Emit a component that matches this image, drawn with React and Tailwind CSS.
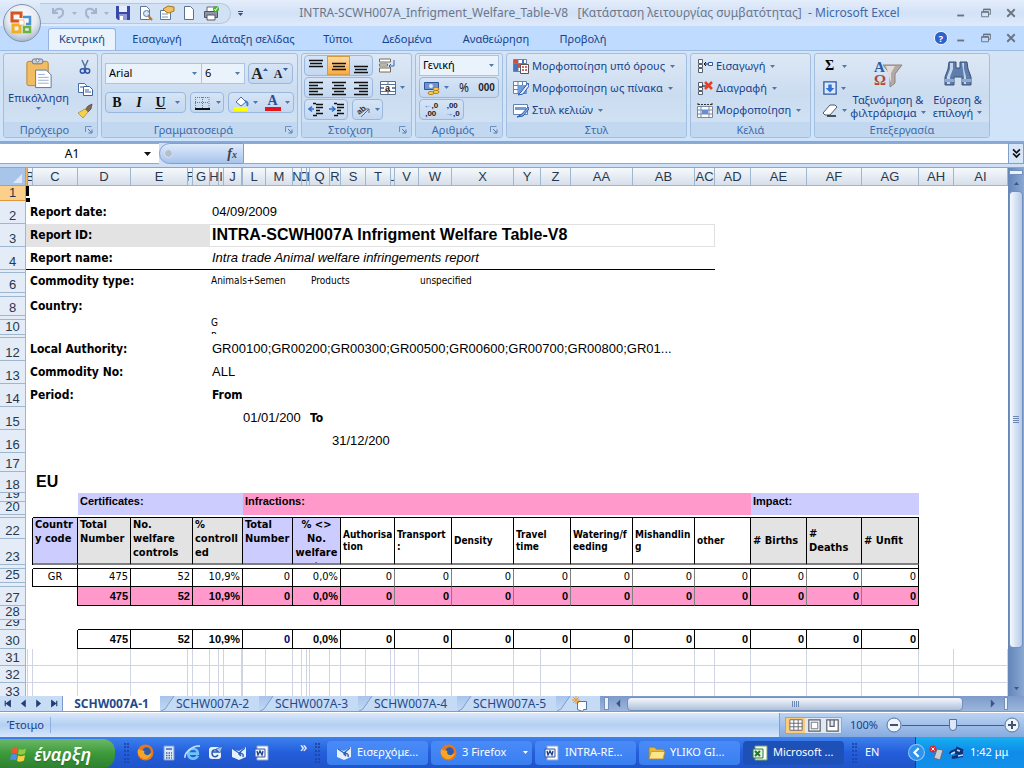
import React from 'react';

const COLUMNS = [
  ['A', 2], ['B', 5], ['C', 45], ['D', 53], ['E', 57], ['F', 5], ['G', 17], ['H', 9], ['I', 5],
  ['J', 18], ['', 1], ['L', 23], ['M', 27], ['N', 9], ['O', 5], ['I', 3], ['Q', 20], ['R', 11],
  ['S', 25], ['T', 25], ['U', 4], ['V', 24], ['W', 33], ['X', 62], ['Y', 27], ['Z', 30],
  ['AA', 62], ['AB', 62], ['AC', 20], ['AD', 36], ['AE', 56], ['AF', 55], ['AG', 57], ['AH', 35], ['AI', null],
];

const HEADERS = [
  { text: 'Countr y code', span: 1, look: 'bg-[#ccccff] items-start text-[11px] leading-[14px]' },
  { text: 'Total Number', span: 1, look: 'bg-[#e3e3e3] items-start text-[11px] leading-[14px]' },
  { text: 'No. welfare controls', span: 2, look: 'bg-[#e3e3e3] items-start text-[11px] leading-[14px]' },
  { text: '% controll ed', span: 5, look: 'bg-[#e3e3e3] items-start text-[11px] leading-[14px]' },
  { text: 'Total Number', span: 2, look: 'bg-[#ccccff] items-start text-[11px] leading-[14px]' },
  { text: '% <> No. welfare t', span: 5, look: 'bg-[#ccccff] items-start text-center text-[11px] leading-[14px]' },
  { text: 'Authorisa tion', span: 3, look: 'bg-white items-center text-[10px] leading-3' },
  { text: 'Transport :', span: 2, look: 'bg-white items-center text-[10px] leading-3' },
  { text: 'Density', span: 1, look: 'bg-white items-center text-[10px] leading-3' },
  { text: 'Travel time', span: 2, look: 'bg-white items-center text-[10px] leading-3' },
  { text: 'Watering/f eeding', span: 1, look: 'bg-white items-center text-[10px] leading-3' },
  { text: 'Mishandlin g', span: 1, look: 'bg-white items-center text-[10px] leading-3' },
  { text: 'other', span: 2, look: 'bg-white items-center text-[10px] leading-3' },
  { text: '# Births', span: 1, look: 'bg-[#e3e3e3] items-center text-[11px] leading-[14px]' },
  { text: '#\nDeaths', span: 1, look: 'bg-[#e3e3e3] items-center text-[11px] leading-[14px]' },
  { text: '# Unfit', span: 1, look: 'bg-[#e3e3e3] items-center text-[11px] leading-[14px]' },
];

const VALUES = ['475', '52', '10,9%', '0', '0,0%', '0', '0', '0', '0', '0', '0', '0', '0', '0', '0'];

/* ---------- small shared pieces ---------- */

const Caret = ({ className = 'text-[#5078b0]' }) => (
  <svg viewBox="0 0 5 3" className={`w-[5px] h-[3px] shrink-0 ${className}`}><path d="M0 0h5L2.5 3z" fill="currentColor" /></svg>
);

const Svg = ({ s = 16, children, className = '' }) => (
  <svg width={s} height={s} viewBox="0 0 16 16" fill="none" className={`shrink-0 ${className}`}>{children}</svg>
);

const Lines = ({ rows }) => (
  <Svg>
    {rows.map(([y, x, w]) => <path key={y} d={`M${x} ${y + 0.5}h${w}`} stroke="#111" strokeWidth="1.500" />)}
  </Svg>
);

const Box = ({ children, className = '' }) => (
  <div className={`flex items-stretch h-[21px] border border-[#9ab8de] rounded-sm bg-linear-to-b from-[#d6e4f5] to-[#c3d8f0] ${className}`}>{children}</div>
);

const IconButton = ({ label, children, className = 'w-[22px]' }) => (
  <button type="button" aria-label={label} className={`flex items-center justify-center gap-1 ${className}`}>{children}</button>
);

const Combo = ({ label, value, className }) => (
  <div className={`flex items-center h-[21px] pl-[3px] pr-1 border border-[#abc4e4] bg-[#eaf2fb] ${className}`}>
    <select aria-label={label} className="appearance-none flex-1 min-w-0 bg-transparent text-[11px] text-black outline-none">
      <option>{value}</option>
    </select>
    <Caret />
  </div>
);

const Group = ({ title, launcher, className, children }) => (
  <section className={`flex flex-col h-[85px] border border-[#a3bfdf] rounded-[3px] overflow-hidden bg-linear-to-b from-[#dde8f5] via-[#cbdcf0] to-[#d3e4f6] shrink-0 ${className}`}>
    <div className="flex-1 min-h-0">{children}</div>
    <div className="flex items-center h-[15px] bg-[#c1d8f0] text-[11px] text-[#3e6aaa]">
      <span className="flex-1 text-center leading-[14px]">{title}</span>
      {launcher && (
        <button type="button" aria-label={`${title}: επιλογές`} className="mr-1">
          <Svg s={8}><path d="M1 12V1h12" stroke="#6c8fc0" strokeWidth="2" /><path d="M6 6l7 7M14 7v7H7" stroke="#5078b0" strokeWidth="2" /></Svg>
        </button>
      )}
    </div>
  </section>
);

const RibbonItem = ({ icon, text }) => (
  <button type="button" className="flex items-center gap-[3px] h-[22px] text-[11px] text-[#15428b] whitespace-nowrap">
    {icon}<span className="pr-[2px]">{text}</span><Caret />
  </button>
);

const WindowButtons = ({ className = '' }) => (
  <div className={`flex items-center text-[#6b7482] ${className}`}>
    <button type="button" aria-label="Ελαχιστοποίηση" className="w-[25px]"><Svg s={10}><path d="M2 12h11" stroke="currentColor" strokeWidth="3" /></Svg></button>
    <button type="button" aria-label="Επαναφορά" className="w-[25px]"><Svg s={10}><path d="M4 5V2h11v8h-3M1 6h11v8H1z" stroke="currentColor" strokeWidth="1.5" /><path d="M1 6.500h11M4 2.500h11" stroke="currentColor" strokeWidth="2.500" /></Svg></button>
    <button type="button" aria-label="Κλείσιμο" className="w-[18px]"><Svg s={10}><path d="M2 2l12 12M14 2L2 14" stroke="currentColor" strokeWidth="3" /></Svg></button>
  </div>
);

/* ---------- icons ---------- */

const OfficeLogo = () => (
  <svg viewBox="0 0 40 40" className="w-10 h-10">
    <defs>
      <radialGradient id="orb" cx="50%" cy="35%" r="65%">
        <stop offset="0" stopColor="#ffffff" /><stop offset=".6" stopColor="#e6ebf2" /><stop offset="1" stopColor="#a9b8cc" />
      </radialGradient>
    </defs>
    <circle cx="20" cy="20" r="18.500" fill="url(#orb)" stroke="#7f93b0" />
    <g fill="none" strokeWidth="3">
      <path d="M17 18h-7v-8h9v5" stroke="#d9531e" />
      <path d="M21 14h7v7h-4" stroke="#4a90d9" strokeWidth="2.500" />
      <path d="M18 22v7h-7v-7z" stroke="#f0b020" />
      <path d="M22 24h6v5h-6z" stroke="#6cb33f" strokeWidth="2.500" />
    </g>
    <path d="M17 17h5v5h-5z" fill="#fff" stroke="#e8a070" strokeWidth=".7" />
  </svg>
);

const Undo = () => <Svg className="text-[#a3b4cc]"><path d="M3 3v5h5M4 7c3-5 10-4 9 1 0 2-2 4-5 5" stroke="currentColor" strokeWidth="2" /></Svg>;
const Redo = () => <Svg className="text-[#a3b4cc]"><path d="M13 3v5H8M12 7C9 2 2 3 3 8c0 2 1 4 3 5" stroke="currentColor" strokeWidth="2" /></Svg>;
const Save = () => <Svg><path d="M1 1h14v14H3l-2-2z" fill="#3a49a8" /><path d="M4 1h8v6H4z" fill="#e8ecff" /><path d="M4 9h8v6H4z" fill="#8f9bd8" /><path d="M5 11h3v4H5z" fill="#fff" /></Svg>;
const Page = () => <path d="M3.500 1.500h6l3 3v10h-9z" fill="#fff" stroke="#5b7196" />;
const Preview = () => <Svg><Page /><circle cx="9.500" cy="8.500" r="3" fill="#d5e8fb" stroke="#56789f" /><path d="M11.500 11l3.500 4" stroke="#b4762c" strokeWidth="2" /></Svg>;
const Props = () => <Svg><path d="M1.500 5.500h10v9h-10z" fill="#fff" stroke="#56789f" /><path d="M3 9h6M3 12h6" stroke="#7c94b8" /><path d="M4 4l5-3 6 1v4l-5 2-3-1z" fill="#f2c160" stroke="#a87420" /></Svg>;
const Print = () => <Svg><path d="M4 2h8v5H4z" fill="#fff" stroke="#667" /><path d="M1.500 6.500h13v6h-13z" fill="#8c95a3" stroke="#4c5563" /><path d="M4 10h8v5H4z" fill="#fff" stroke="#556" /><circle cx="13" cy="4" r="3" fill="#4fae3a" /><path d="M11.500 4l1 1.500 2-3" stroke="#fff" /></Svg>;

const Clipboard = () => (
  <svg viewBox="0 0 28 32" className="w-7 h-[31px]">
    <rect x="1.500" y="3.500" width="22" height="25" rx="2" fill="#f2bd62" stroke="#b98431" />
    <rect x="7" y="1" width="11" height="5" rx="2" fill="#c9d0da" stroke="#6d7888" /><circle cx="12.500" cy="2.500" r="1.500" fill="#fff" stroke="#6d7888" />
    <path d="M10.500 12.500h11l5 5v13h-16z" fill="#fff" stroke="#60789c" />
    <path d="M13 17h7M13 20h11M13 23h11M13 26h11" stroke="#9ab0cf" />
  </svg>
);
const Scissors = () => <Svg><path d="M5 1l4 9M11 1L7 10" stroke="#54749f" strokeWidth="1.500" /><circle cx="5.500" cy="12" r="2.200" stroke="#2f55a4" strokeWidth="1.500" /><circle cx="10.500" cy="12" r="2.200" stroke="#2f55a4" strokeWidth="1.500" /></Svg>;
const Copy = () => <Svg><path d="M1.500 2.500h6l2 2v7h-8z" fill="#fff" stroke="#4b6ea8" /><path d="M6.500 5.500h6l3 3v6h-9z" fill="#fff" stroke="#3d62a4" /><path d="M3 6h3M8 9h4M8 11h6" stroke="#3d62a4" /></Svg>;
const Brush = () => <Svg><path d="M15 1l-4 2-3 4 3 2 3-3z" fill="#7f6a5a" stroke="#4e4035" strokeWidth=".7" /><path d="M8 6L1 10l5 5 5-6z" fill="#f4d24c" stroke="#a8852a" strokeWidth=".7" /></Svg>;
const Bucket = () => <Svg><path d="M3 7l5-5 5 5-5 4z" fill="#fff" stroke="#456ca5" /><path d="M12 6c3 1 3 3 2 5" stroke="#3d7bd6" strokeWidth="2" /><path d="M1 12h14v4H1z" fill="#ffff00" /></Svg>;
const Borders = () => <Svg><path d="M1.500 2v11M8.500 2v11M15 2v11M1 2.500h14M1 7.500h14" stroke="#6d7a8c" strokeDasharray="1 1" /><path d="M1 14h15" stroke="#111" strokeWidth="2" /></Svg>;
const Wrap = () => <Svg><path d="M.5 1h11v3H.5zM.5 6h8v2H.5zM.5 10h11v4H.5z" fill="#fff" stroke="#7a6a52" /><path d="M15 2v6h-5M12 6l-2 2 2 2" stroke="#3d62a4" /></Svg>;
const Merge = () => <Svg><path d="M.5 1.500h15v13H.5zM.5 4.500h15M.5 11.500h15M8 1.500v3M8 11.500v3" fill="#fff" stroke="#5c6f8e" /><text x="5" y="11" fontSize="9" fontWeight="bold" fontFamily="Liberation Sans" fill="#111">a</text><path d="M0 8h4M12 8h4" stroke="#3d62a4" strokeWidth="1.500" /></Svg>;
const Orient = () => <Svg><text x="2" y="11" fontSize="8" fontWeight="bold" fontFamily="Liberation Sans" fill="#333" transform="rotate(-40 6 9)">ab</text><path d="M6 15l8-8M14 11V7h-4" stroke="#667" /></Svg>;
const Indent = ({ flip }) => (
  <Svg>
    <path d="M8 2.500h7M8 5.500h7M8 8.500h4M8 11.500h7M5 13.500h4M5 1.500h3" stroke="#111" strokeWidth="1.500" />
    {flip ? <path d="M0 7h5M3 4.500L6 7 3 9.500" stroke="#2f6fd0" strokeWidth="1.500" /> : <path d="M1 7h5M4 4.500L1 7l3 2.500" stroke="#2f6fd0" strokeWidth="1.500" />}
  </Svg>
);
const Money = () => <Svg><path d="M.5 2.500h14v7H.5z" fill="#6f94d2" stroke="#31549a" /><circle cx="7" cy="6" r="2" fill="#dfe9f8" /><ellipse cx="12" cy="9" rx="3" ry="1.500" fill="#ffd34f" stroke="#b17e14" /><ellipse cx="12" cy="12" rx="3" ry="1.500" fill="#ffd34f" stroke="#b17e14" /><ellipse cx="7" cy="13" rx="3" ry="1.500" fill="#ffd34f" stroke="#b17e14" /></Svg>;
const GridBase = () => <path d="M.5 1.500h13v12H.5zM.5 5.500h13M.5 9.500h13M5 1.500v12M9.500 1.500v12" fill="#fff" stroke="#6483b5" />;
const CondFormat = () => <Svg><GridBase /><path d="M1 2h4v3H1zM5 6h3v3H5z" fill="#d64c3c" /><path d="M1 6h4v7H1zM9 2h2v4H9z" fill="#4873bd" /><path d="M7.500 6.500h8v9h-8z" fill="#fff" stroke="#555" /><path d="M9 9h2M12 9h2M9 12h2M12 12h2" stroke="#c33" strokeWidth="1.500" /></Svg>;
const TableFormat = () => <Svg><GridBase /><path d="M5 5h9v8H5z" fill="#6f9ce0" /><path d="M15 3L8 12l-3 3 5-1 6-8z" fill="#e8eefb" stroke="#2d5aa8" /></Svg>;
const CellStyle = () => <Svg><path d="M.5 2.500h14v10H.5z" fill="#fff" stroke="#6483b5" /><path d="M2 5h11v3H2z" fill="#6f9ce0" /><path d="M15 5L9 12l-5 3 6-1 6-7z" fill="#7cb0f0" stroke="#2d5aa8" /></Svg>;
const InsertCell = () => <Svg><path d="M1.500 1.500h4v4h-4zM1.500 6.500h4v3h-4zM1.500 10.500h4v4h-4z" fill="#fff" stroke="#555f70" /><path d="M7 6h4M9 4L7 6l2 2" stroke="#111" /><path d="M11.500 4.500h4v3h-4z" fill="#fff" stroke="#2d5aa8" /></Svg>;
const DeleteCell = () => <Svg><path d="M1.500 2.500h4v4h-4zM1.500 7.500h4v3h-4zM1.500 11.500h4v3h-4z" fill="#fff" stroke="#555f70" /><path d="M5 6h5" stroke="#111" /><path d="M8 2l7 7M15 2L8 9" stroke="#e2402a" strokeWidth="2.500" /></Svg>;
const FormatCell = () => <Svg><path d="M.5 4.500h15v11H.5zM.5 8h15M.5 12h15M4 4.500v11M12 4.500v11" fill="#fff" stroke="#7a88a0" /><path d="M5 8h6v4H5z" fill="#5f8fe0" /><path d="M1 1v3M15 1v3M1 2.500h14" stroke="#333" strokeDasharray="2 1" /></Svg>;
const FillDown = () => <Svg s={14}><path d="M1 1h14v14H1z" fill="#dfe9fa" stroke="#2f5aa8" strokeWidth="1.500" /><path d="M6 4h4v4h3l-5 5-5-5h3z" fill="#2f74dc" /></Svg>;
const Eraser = () => <Svg><path d="M1 11l7-8h5l2 2-7 8H3z" fill="#fff" stroke="#4d5b70" /><path d="M5 14h9" stroke="#222" strokeWidth="1.500" /></Svg>;
const SortFilter = () => (
  <svg viewBox="0 0 30 30" className="w-[30px] h-[30px]">
    <path d="M10 6h19l-7 9v9l-5 4V15z" fill="#b3aaa6" stroke="#8d8581" /><path d="M13 7h9l-4 7v10" fill="#e2dcd8" />
    <text x="1" y="13" fontSize="15" fontWeight="bold" fontFamily="Liberation Serif" fill="#2c5ca8">A</text>
    <text x="1" y="26" fontSize="15" fontWeight="bold" fontFamily="Liberation Serif" fill="#b0483c">Ω</text>
  </svg>
);
const Binoculars = () => (
  <svg viewBox="0 0 28 28" className="w-7 h-7">
    <path d="M5 3h7v6h4V3h7l1 7 3 8v8h-9v-8h-8v8H1v-8l3-8z" fill="#5f7daa" stroke="#3a5279" />
    <path d="M6 4h3v6L6 18v7H3v-7l3-8zM18 4h2v6l2 8v7h-2v-7z" fill="#c3d5ee" />
    <path d="M1 20h9v3H1zM18 20h9v3h-9z" fill="#8ea9d2" />
  </svg>
);
const WindowsFlag = () => (
  <svg viewBox="0 0 18 18" className="w-[18px] h-[18px]">
    <path d="M2 4c2-2 4-2 6-.5L7 9C5 7.500 3 8 1 9z" fill="#ee5a2b" /><path d="M9 4c2 1 4 1 7-.5l-1 5c-3 1.500-5 1.500-7 .5z" fill="#8fce3f" />
    <path d="M1 10c2-1 4-1.500 6 0l-1 5.500C4 14 2 14 0 15.500z" fill="#4f8df0" /><path d="M8 10.500c2 1 4 1 7-.5l-1 5.500c-3 1.500-5 1.500-7 .5z" fill="#fccf3d" />
  </svg>
);
const Firefox = () => <Svg s={17}><circle cx="8" cy="8" r="7.500" fill="#e8761c" /><circle cx="9" cy="7" r="4" fill="#2d5cae" /><path d="M1 5c2 1 3 1 5 1 2 1 0 2 1 3 2 3 5 1 7-1-1 5-6 8-10 5-3-2-4-5-3-8z" fill="#f6a623" /></Svg>;
const Calc = () => <Svg><path d="M3 1h10v14H3z" fill="#dce8f8" stroke="#7c9cd0" /><path d="M5 3h6v2H5z" fill="#5f86c8" /><path d="M5 8h6M5 10.500h6M5 13h6" stroke="#47689f" strokeDasharray="1.500 1" strokeWidth="1.500" /></Svg>;
const Explorer = () => <Svg s={17}><path d="M13 11c-2 4-9 4-9-2 0-6 9-6 9 0H5" stroke="#6fc3f7" strokeWidth="2.500" /><path d="M1 13C0 9 8 1 15 2" stroke="#c5e4fb" strokeWidth="1.500" /></Svg>;
const OutlookExpress = () => <Svg><rect x="1" y="2" width="12" height="12" rx="3" fill="#e9f1fc" /><path d="M10 10c-2 3-6 2-6-2s5-4 6-1H5" stroke="#2858b0" strokeWidth="1.500" /><path d="M8 4l7-3-3 7z" fill="#9fc1ef" stroke="#2858b0" strokeWidth=".7" /></Svg>;
const Mail = () => <Svg><path d="M1 4l7 2 7-4v10l-7 3-7-3z" fill="#e7effb" /><path d="M2 4l6 4 6-5" stroke="#2b62b8" strokeWidth="1.200" /><path d="M12 12c1-3-1-4-4-3M10 7L8 9l2 2" stroke="#2b62b8" strokeWidth="1.500" /></Svg>;
const Word = () => <Svg><path d="M3 1h11v14H3z" fill="#fff" stroke="#8aa6d6" /><path d="M1 4h10v8H1z" fill="#eef3fc" stroke="#2f559f" /><path d="M3 6l1 4 2-4 2 4 1-4" stroke="#1f3f8c" strokeWidth="1.300" /></Svg>;
const Folder = () => <Svg s={17}><path d="M1 3h5l2 2h7v9H1z" fill="#e9b83a" stroke="#a87c18" strokeWidth=".7" /><path d="M1 14l2-7h13l-2 7z" fill="#fde58a" stroke="#b98f28" strokeWidth=".7" /></Svg>;
const Excel = () => <Svg><path d="M3 1h12v14H3z" fill="#fff" stroke="#6ea36e" /><path d="M1 4h10v9H1z" fill="#e4f3e2" stroke="#2f7a33" /><path d="M3 6l5 5M8 6l-5 5" stroke="#1f7a2a" strokeWidth="2" /></Svg>;

/* ---------- ribbon ---------- */

const Ribbon = () => (
  <div className="h-[93px] px-[3px] pt-[2px] flex gap-[3px] bg-linear-to-b from-[#d4e3f5] to-[#cfe3fa] border-t border-[#9abbe3] border-b-2 border-b-[#86a9d8] overflow-hidden">
    <Group title="Πρόχειρο" launcher className="w-[95px]">
      <div className="flex">
        <button type="button" className="w-[69px] pt-1 flex flex-col items-center text-[#15428b] text-[11px] leading-[18px]">
          <Clipboard />
          <span>Επικόλληση</span>
          <Caret />
        </button>
        <div className="flex flex-col gap-[6px] pt-[5px] pl-1">
          <button type="button" aria-label="Αποκοπή"><Scissors /></button>
          <button type="button" aria-label="Αντιγραφή"><Copy /></button>
          <button type="button" aria-label="Πινέλο μορφοποίησης"><Brush /></button>
        </div>
      </div>
    </Group>

    <Group title="Γραμματοσειρά" launcher className="w-[197px]">
      <div className="flex flex-col gap-2 px-[3px] pt-[9px]">
        <div className="flex">
          <Combo label="Γραμματοσειρά" value="Arial" className="w-[97px]" />
          <Combo label="Μέγεθος" value="6" className="w-[43px] border-l-0" />
          <Box className="ml-[3px] font-['Liberation_Serif',serif] font-bold text-[#222]">
            <IconButton label="Αύξηση" className="w-[21px] text-base"><span>A</span><Caret className="-scale-y-100 -ml-1 -mt-2 text-[#2f5aa8]" /></IconButton>
            <IconButton label="Μείωση" className="w-[22px] text-xs"><span>A</span><Caret className="-ml-[3px] -mt-2 text-[#2f5aa8]" /></IconButton>
          </Box>
        </div>
        <div className="flex gap-1">
          <Box className="font-['Liberation_Serif',serif] text-sm font-bold text-[#111]">
            <IconButton label="Έντονα">B</IconButton>
            <IconButton label="Πλάγια"><i>I</i></IconButton>
            <IconButton label="Υπογράμμιση" className="w-[35px] gap-[9px]"><u>U</u><Caret /></IconButton>
          </Box>
          <Box><IconButton label="Περιγράμματα" className="w-8 gap-[6px]"><Borders /><Caret /></IconButton></Box>
          <Box>
            <IconButton label="Χρώμα γεμίσματος" className="w-8"><Bucket /><Caret /></IconButton>
            <IconButton label="Χρώμα γραμματοσειράς" className="w-8">
              <span className="w-4 border-b-4 border-[#e8141c] font-['Liberation_Serif',serif] font-bold text-sm leading-3 text-[#2c4f94]">A</span><Caret />
            </IconButton>
          </Box>
        </div>
      </div>
    </Group>

    <Group title="Στοίχιση" launcher className="w-[111px]">
      <div className="flex flex-col gap-px px-[2px] pt-px">
        <div className="flex gap-[6px]">
          <Box>
            <IconButton label="Επάνω"><Lines rows={[[2, 1, 14], [5, 2, 12], [8, 1, 14]]} /></IconButton>
            <IconButton label="Μέση" className="w-[23px] bg-linear-to-b from-[#fdd9a0] to-[#fcab3c] border border-[#d79a3c]"><Lines rows={[[5, 1, 14], [8, 2, 12], [11, 1, 14]]} /></IconButton>
            <IconButton label="Κάτω"><Lines rows={[[8, 1, 14], [11, 2, 12], [14, 1, 14]]} /></IconButton>
          </Box>
          <IconButton label="Αναδίπλωση" className="w-4"><Wrap /></IconButton>
        </div>
        <div className="flex gap-[6px]">
          <Box>
            <IconButton label="Αριστερά"><Lines rows={[[2, 1, 14], [5, 1, 9], [8, 1, 14], [11, 1, 9], [14, 1, 14]]} /></IconButton>
            <IconButton label="Κέντρο" className="w-[23px]"><Lines rows={[[2, 1, 14], [5, 3, 10], [8, 1, 14], [11, 3, 10], [14, 1, 14]]} /></IconButton>
            <IconButton label="Δεξιά"><Lines rows={[[2, 1, 14], [5, 6, 9], [8, 1, 14], [11, 6, 9], [14, 1, 14]]} /></IconButton>
          </Box>
          <IconButton label="Συγχώνευση" className="w-[26px]"><Merge /><Caret /></IconButton>
        </div>
        <div className="flex gap-1">
          <Box><IconButton label="Μείωση εσοχής" className="w-[21px]"><Indent /></IconButton><IconButton label="Αύξηση εσοχής" className="w-[21px]"><Indent flip /></IconButton></Box>
          <Box><IconButton label="Προσανατολισμός" className="w-[29px]"><Orient /><Caret /></IconButton></Box>
        </div>
      </div>
    </Group>

    <Group title="Αριθμός" launcher className="w-[88px]">
      <div className="flex flex-col gap-px px-[3px] pt-px">
        <Combo label="Μορφή αριθμού" value="Γενική" className="w-full" />
        <Box className="text-xs text-[#222]">
          <IconButton label="Λογιστική μορφή" className="w-[33px]"><Money /><Caret /></IconButton>
          <IconButton label="Ποσοστό">%</IconButton>
          <IconButton label="Χιλιάδες" className="flex-1 text-[10px] font-bold font-['Liberation_Sans',sans-serif]">000</IconButton>
        </Box>
        <Box className="w-[45px] text-[8px] leading-2 font-['Liberation_Sans',sans-serif] font-bold text-[#222]">
          <IconButton label="Αύξηση δεκαδικών"><span><span className="text-[#2f6fd0]">←</span>,0<br />,00</span></IconButton>
          <IconButton label="Μείωση δεκαδικών"><span>,00<br /><span className="text-[#2f6fd0]">→</span>,0</span></IconButton>
        </Box>
      </div>
    </Group>

    <Group title="Στυλ" className="w-[181px]">
      <div className="flex flex-col items-start pl-[6px] pt-px">
        <RibbonItem icon={<CondFormat />} text="Μορφοποίηση υπό όρους" />
        <RibbonItem icon={<TableFormat />} text="Μορφοποίηση ως πίνακα" />
        <RibbonItem icon={<CellStyle />} text="Στυλ κελιών" />
      </div>
    </Group>

    <Group title="Κελιά" className="w-[121px]">
      <div className="flex flex-col items-start pl-[6px] pt-px">
        <RibbonItem icon={<InsertCell />} text="Εισαγωγή" />
        <RibbonItem icon={<DeleteCell />} text="Διαγραφή" />
        <RibbonItem icon={<FormatCell />} text="Μορφοποίηση" />
      </div>
    </Group>

    <Group title="Επεξεργασία" className="w-[176px]">
      <div className="flex">
        <div className="flex flex-col pl-[6px] pt-px w-[31px] text-black">
          <IconButton label="Άθροισμα" className="h-[22px] w-[26px]"><b className="w-4 text-sm font-['Liberation_Serif',serif]">Σ</b><Caret /></IconButton>
          <IconButton label="Γέμισμα" className="h-[22px] w-[26px]"><FillDown /><Caret /></IconButton>
          <IconButton label="Απαλοιφή" className="h-[22px] w-[26px]"><Eraser /><Caret /></IconButton>
        </div>
        <button type="button" className="w-[84px] pt-[5px] flex flex-col items-center text-[11px] leading-[13px] text-[#15428b] whitespace-nowrap">
          <SortFilter />
          <span className="pt-1">Ταξινόμηση &amp;</span>
          <span className="flex items-center gap-1">φιλτράρισμα <Caret /></span>
        </button>
        <button type="button" className="w-[55px] pt-[5px] flex flex-col items-center text-[11px] leading-[13px] text-[#15428b] whitespace-nowrap">
          <Binoculars />
          <span className="pt-[6px]">Εύρεση &amp;</span>
          <span className="flex items-center gap-1">επιλογή <Caret /></span>
        </button>
      </div>
    </Group>
  </div>
);

/* ---------- worksheet ---------- */

const Row = ({ n, h, label = true, active, children }) => (
  <tr>
    <th scope="row" className={`p-0 border-b border-r font-normal ${active ? 'bg-[#fcd08a] border-[#e2963a]' : 'bg-[#e3ecf7] border-[#9eb6ce]'}`}>
      <div className="flex items-end justify-center overflow-hidden text-[13px] leading-[14px] text-[#26384f]" style={{ height: h - 1 }}>{label && n}</div>
    </th>
    {children}
  </tr>
);

const Cell = ({ span = 1, rows = 1, h, className = '', inner = '', children }) => (
  <td colSpan={span} rowSpan={rows} className={`p-0 relative align-top ${className}`}>
    {children && <div className={`overflow-hidden whitespace-nowrap ${inner}`} style={{ height: h }}>{children}</div>}
  </td>
);

const Blank = () => <Cell span={35} />;

const LABEL = "pl-1 flex items-center font-bold text-xs font-['DejaVu_Sans_Condensed','DejaVu_Sans',sans-serif]";
const BOLD = "flex items-center font-bold text-xs font-['DejaVu_Sans_Condensed','DejaVu_Sans',sans-serif]";
const SMALL = "pl-px flex items-center text-[10px] font-['DejaVu_Sans_Condensed','DejaVu_Sans',sans-serif]";
const VALUE = 'pl-[2px] flex items-center text-[13px]';
const BAND = 'pl-[2px] font-bold text-[11px] leading-4';

const LabelRow = ({ n, h, label, children, fill = '', top = 21 }) => (
  <Row n={n} h={h}>
    <Cell span={7} h={top} inner={LABEL} className={fill}>{label}</Cell>
    {children}
  </Row>
);

const DataCells = ({ h, rows = 1, strong, fill = '', solid }) =>
  VALUES.map((v, i) => {
    const gray = !solid && i >= 5 && i !== 11 && i !== 14;
    return (
      <Cell
        key={i}
        span={HEADERS[i + 1].span}
        rows={rows}
        h={h - 1}
        className={`border-r border-b border-b-black ${gray ? 'border-r-[#808080]' : 'border-r-black'} ${fill}`}
        inner={`flex items-center justify-end pr-[2px] text-[11px] ${strong ? 'font-bold' : "font-['DejaVu_Sans_Condensed','DejaVu_Sans',sans-serif]"} ${solid && i === 3 ? 'text-[#000080]' : ''}`}
      >
        {v}
      </Cell>
    );
  });

const GridRow = ({ n }) => (
  <Row n={n} h={17}>
    {COLUMNS.map((c, i) => <Cell key={i} className="border-r border-b border-[#d0d3e2]" />)}
  </Row>
);

const Sheet = () => (
  <table className="table-fixed w-full border-separate border-spacing-0 bg-white font-['Liberation_Sans',Arial,sans-serif] text-black">
    <colgroup>
      <col className="w-[26px]" />
      {COLUMNS.map(([, w], i) => <col key={i} style={w ? { width: w } : undefined} />)}
    </colgroup>
    <thead>
      <tr>
        <th aria-label="Επιλογή όλων" className="p-0 border-r border-b border-[#8ba6cb] bg-[#a9c4e9]">
          <Svg s={16} className="ml-2"><path d="M14 5v9H5z" fill="#dbe8f8" /></Svg>
        </th>
        {COLUMNS.map(([name], i) => (
          <th key={i} scope="col" className={`p-0 border-r border-b font-normal ${i === 0 ? 'bg-[#f6b55c] border-[#e2963a]' : 'bg-linear-to-b from-[#f6f9fc] to-[#d7dfea] border-[#9eb6ce]'}`}>
            <div className="h-[17px] flex items-center justify-center overflow-hidden text-[13px] text-[#26384f]">{i > 0 && name}</div>
          </th>
        ))}
      </tr>
    </thead>
    <tbody>
      <Row n={1} h={15} active>
        <td colSpan={35} className="p-0 relative">
          <span className="absolute left-0 top-0 w-[3px] h-[10px] bg-black" />
          <span className="absolute left-0 top-[12px] w-1 h-1 bg-black z-10" />
        </td>
      </Row>
      <LabelRow n={2} h={23} label="Report date:"><Cell span={28} h={21} inner={VALUE}>04/09/2009</Cell></LabelRow>
      <LabelRow n={3} h={23} label="Report ID:" fill="bg-[#e3e3e3]">
        <Cell span={22} h={20} className="border border-l-0 border-[#e0e0e0]" inner="pl-[2px] flex items-center font-bold text-base">INTRA-SCWH007A Infrigment Welfare Table-V8</Cell>
        <Cell span={6} />
      </LabelRow>
      <Row n={4} h={23}>
        <Cell span={7} h={21} inner={LABEL} className="border-b border-black">Report name:</Cell>
        <Cell span={22} h={21} className="border-b border-black" inner={`${VALUE} italic`}>Intra trade Animal welfare infringements report</Cell>
        <Cell span={6} />
      </Row>
      <Row n={5} h={3} label={false}><Blank /></Row>
      <LabelRow n={6} h={20} label="Commodity type:" top={16}>
        <Cell span={9} h={14} inner={SMALL}>Animals+Semen</Cell>
        <Cell span={6} h={14} inner={SMALL}>Products</Cell>
        <Cell span={13} h={14} inner={SMALL}>unspecified</Cell>
      </LabelRow>
      <Row n={7} h={4} label={false}><Blank /></Row>
      <LabelRow n={8} h={19} label="Country:" top={18}><Cell span={28} /></LabelRow>
      <Row n={9} h={4} label={false}>
        <Cell span={7} rows={2} />
        <td rowSpan={2} className="p-0 align-top">
          <div className="h-[18px] overflow-hidden break-all pl-px text-[10px] leading-[14px] font-['DejaVu_Sans_Condensed','DejaVu_Sans',sans-serif]">GR</div>
        </td>
        <Cell span={27} rows={2} />
      </Row>
      <Row n={10} h={15} />
      <Row n={11} h={3} label={false}><Blank /></Row>
      <LabelRow n={12} h={23} label="Local Authority:"><Cell span={28} h={21} inner={VALUE}>GR00100;GR00200;GR00300;GR00500;GR00600;GR00700;GR00800;GR01...</Cell></LabelRow>
      <LabelRow n={13} h={23} label="Commodity No:"><Cell span={28} h={21} inner={VALUE}>ALL</Cell></LabelRow>
      <LabelRow n={14} h={23} label="Period:"><Cell span={28} h={21} inner={`${BOLD} pl-[2px]`}>From</Cell></LabelRow>
      <Row n={15} h={23}>
        <Cell span={11} />
        <Cell span={5} h={21} inner="flex items-center text-[13px]">01/01/200</Cell>
        <Cell span={19} h={21} inner={BOLD}>To</Cell>
      </Row>
      <Row n={16} h={23}>
        <Cell span={17} />
        <Cell span={18} h={21} inner={VALUE}>31/12/200</Cell>
      </Row>
      <Row n={17} h={19}><Blank /></Row>
      <Row n={18} h={21}>
        <Cell span={2} />
        <Cell span={33} h={19} inner="pl-[3px] flex items-center font-bold text-base">EU</Cell>
      </Row>
      <Row n={19} h={9}>
        <Cell span={3} rows={2} />
        <Cell span={8} rows={2} h={21} className="bg-[#ccccff]" inner={BAND}>Certificates:</Cell>
        <Cell span={19} rows={2} h={21} className="bg-[#ff99cc]" inner={BAND}>Infractions:</Cell>
        <Cell span={3} rows={2} h={21} className="bg-[#ccccff]" inner={BAND}>Impact:</Cell>
        <Cell span={2} rows={2} />
      </Row>
      <Row n={20} h={13} />
      <Row n={21} h={3} label={false}>
        <Cell span={2} />
        <Cell span={31} className="border-b border-black" />
        <Cell span={2} />
      </Row>
      <Row n={22} h={21}>
        <Cell span={2} rows={2} className="border-r border-black" />
        {HEADERS.map((c, i) => (
          <th key={i} scope="col" colSpan={c.span} rowSpan={2} className="p-0 border-r border-b-2 border-r-black border-b-[#808080]">
            <div className={`flex h-[45px] overflow-hidden whitespace-pre-line font-bold font-['DejaVu_Sans_Condensed','DejaVu_Sans',sans-serif] ${i === 5 ? 'justify-center' : 'pl-[2px] text-left'} ${c.look}`}><span>{c.text}</span></div>
          </th>
        ))}
        <Cell span={2} rows={2} />
      </Row>
      <Row n={23} h={26} />
      <Row n={24} h={4} label={false}>
        <Cell span={2} />
        <Cell className="border-b border-r border-black" />
        <Cell span={30} className="border-b border-r border-black" />
        <Cell span={2} />
      </Row>
      <Row n={25} h={14}>
        <Cell span={2} rows={2} className="border-r border-black" />
        <Cell rows={2} h={17} className="border-r border-b border-black" inner="flex items-center justify-center text-[11px] font-['DejaVu_Sans_Condensed','DejaVu_Sans',sans-serif]">GR</Cell>
        <DataCells h={18} rows={2} />
        <Cell span={2} rows={2} />
      </Row>
      <Row n={26} h={4} label={false} />
      <Row n={27} h={19}>
        <Cell span={3} className="border-r border-black" />
        <DataCells h={19} strong fill="bg-[#ff99cc]" />
        <Cell span={2} />
      </Row>
      <Row n={28} h={14}><Blank /></Row>
      <Row n={29} h={10}>
        <Cell span={3} />
        <Cell span={30} className="border-b border-black" />
        <Cell span={2} />
      </Row>
      <Row n={30} h={19}>
        <Cell span={3} className="border-r border-black" />
        <DataCells h={19} strong solid />
        <Cell span={2} />
      </Row>
      <GridRow n={31} />
      <GridRow n={32} />
      <GridRow n={33} />
    </tbody>
  </table>
);

const VerticalScroll = () => (
  <div className="w-4 flex flex-col items-center bg-linear-to-r from-[#6385b8] to-[#8aa8d3] shrink-0">
    <span className="w-[14px] h-[5px] mt-[2px] bg-[#eaf2fc] border border-[#7390bd]" />
    <button type="button" aria-label="Κύλιση επάνω" className="h-4 flex items-center"><Caret className="-scale-y-100 text-[#3a5585]" /></button>
    <span className="w-[14px] flex-1 rounded-sm border border-[#7390bd] bg-linear-to-r from-[#f5f9fe] to-[#b4c9e8] flex flex-col items-center justify-center gap-px">
      <i className="w-[6px] h-px bg-[#6c87b2]" /><i className="w-[6px] h-px bg-[#6c87b2]" /><i className="w-[6px] h-px bg-[#6c87b2]" /><i className="w-[6px] h-px bg-[#6c87b2]" />
    </span>
    <span className="h-8" />
    <button type="button" aria-label="Κύλιση κάτω" className="h-4 flex items-center"><Caret className="text-[#3a5585]" /></button>
  </div>
);

const Slant = () => <svg viewBox="0 0 16 15" className="w-4 h-[15px] shrink-0"><path d="M0 15L5 12 14 0h2v15z" fill="#c5daf5" /><path d="M1 15l4-2L14 0" stroke="#7d9ccb" fill="none" /></svg>;

const NAV = [['Πρώτο', 'M4 3v10M13 3v10L6 8z'], ['Προηγούμενο', 'M11 3v10L5 8z'], ['Επόμενο', 'M5 3v10l6-5z'], ['Τελευταίο', 'M3 3v10l7-5zM12 3v10']];

const SheetTabs = () => (
  <div className="h-4 flex items-stretch bg-linear-to-b from-[#a7c4ea] to-[#c3d9f5] border-b border-[#7d9ccb] text-xs leading-[15px] text-[#1f4a8c] shrink-0">
    <div className="w-[63px] flex items-center justify-around border-r border-[#7d9ccb] bg-[#c9dcf5]">
      {NAV.map(([label, d]) => (
        <button key={label} type="button" aria-label={label}><Svg s={9}><path d={d} fill="#1f3f77" stroke="#1f3f77" strokeWidth="2" /></Svg></button>
      ))}
    </div>
    <button type="button" className="w-[97px] bg-white font-bold">SCHW007A-1</button>
    {['SCHW007A-2', 'SCHW007A-3', 'SCHW007A-4', 'SCHW007A-5'].map((name) => (
      <div key={name} className="flex w-[99px]"><Slant /><button type="button" className="flex-1 bg-[#c5daf5] text-left whitespace-nowrap">{name}</button></div>
    ))}
    <Slant />
    <button type="button" aria-label="Νέο φύλλο" className="w-7 bg-[#c5daf5]"><Svg><path d="M5.500 5.500h9v8h-3l-1 2-5-2z" fill="#fff" stroke="#56749f" /><path d="M4 0v8M0 4h8M1 1l6 6M7 1L1 7" stroke="#ee9a2c" /></Svg></button>
    <div className="flex-1 flex items-center bg-linear-to-b from-[#7d9bca] to-[#9cb6dc]">
      <span className="w-[5px] h-[13px] ml-1 mr-px bg-[#eaf2fc] border border-[#7390bd]" />
      <button type="button" aria-label="Κύλιση αριστερά" className="w-[17px] flex justify-center"><Svg s={9}><path d="M11 1v14L4 8z" fill="#3a5585" /></Svg></button>
      <span className="w-[336px] h-[14px] rounded-sm border border-[#7390bd] bg-linear-to-b from-[#f5f9fe] to-[#adbfd9] flex items-center justify-center gap-px">
        <i className="w-px h-[6px] bg-[#6c87b2]" /><i className="w-px h-[6px] bg-[#6c87b2]" /><i className="w-px h-[6px] bg-[#6c87b2]" /><i className="w-px h-[6px] bg-[#6c87b2]" />
      </span>
      <span className="flex-1" />
      <button type="button" aria-label="Κύλιση δεξιά" className="w-4 flex justify-center"><Svg s={9}><path d="M5 1v14l7-7z" fill="#3a5585" /></Svg></button>
      <span className="w-1 h-[13px] ml-1 bg-[#eaf2fc] border border-[#7390bd] mr-4" />
    </div>
  </div>
);

const StatusBar = () => (
  <div className="h-[25px] flex items-center bg-linear-to-b from-[#dbe8fa] via-[#b3cff3] to-[#d6e6fb] border-t border-white text-[11px] text-[#15428b] shrink-0">
    <span className="w-[51px] pl-[7px] border-r border-[#8fb0de]">Έτοιμο</span>
    <span className="flex-1" />
    <div className="h-full flex items-center pl-[5px] border-l border-[#7f9fd0] bg-linear-to-b from-[#bcd3f2] to-[#86abdf]">
      <div className="flex h-[17px] border border-[#8ba9d4] bg-[#dfe9f5]">
        <button type="button" aria-label="Κανονική" className="w-[19px] bg-[#fccb7a] flex items-center justify-center"><Svg s={14}><path d="M1 2h14v12H1zM1 6h14M1 10h14M5.500 2v12M10.500 2v12" fill="#fff" stroke="#5a5f6b" /></Svg></button>
        <button type="button" aria-label="Διάταξη σελίδας" className="w-[18px] flex items-center justify-center"><Svg s={13}><path d="M1 1h14v14H1z" fill="#f1f4f8" stroke="#5a5f6b" strokeWidth="1.500" /><path d="M4 4h8v8H4z" fill="#fff" stroke="#5a5f6b" /></Svg></button>
        <button type="button" aria-label="Προεπισκόπηση" className="w-[18px] flex items-center justify-center"><Svg s={13}><path d="M1 1h14v14H1zM5 1v8h5V1" fill="#fff" stroke="#5a5f6b" strokeWidth="1.500" /></Svg></button>
      </div>
      <span className="w-[44px] text-center">100%</span>
      <button type="button" aria-label="Σμίκρυνση"><Svg><circle cx="8" cy="8" r="7" fill="#eef4fb" stroke="#55729f" /><path d="M4 8h8" stroke="#44536b" strokeWidth="2" /></Svg></button>
      <input type="range" aria-label="Ζουμ" min="10" max="190" defaultValue="100" className="appearance-none w-[102px] h-px bg-[#3f5f94] [&::-webkit-slider-thumb]:appearance-none [&::-webkit-slider-thumb]:w-2 [&::-webkit-slider-thumb]:h-3 [&::-webkit-slider-thumb]:rounded-b-full [&::-webkit-slider-thumb]:border [&::-webkit-slider-thumb]:border-[#55729f] [&::-webkit-slider-thumb]:bg-[#dce8f7]" />
      <button type="button" aria-label="Μεγέθυνση"><Svg><circle cx="8" cy="8" r="7" fill="#eef4fb" stroke="#55729f" /><path d="M4 8h8M8 4v8" stroke="#44536b" strokeWidth="2" /></Svg></button>
      <span className="w-1" />
    </div>
  </div>
);

const TASKS = [
  { icon: <Mail />, text: 'Εισερχόμε...' },
  { icon: <Firefox />, text: '3 Firefox', menu: true },
  { icon: <Word />, text: 'INTRA-RE...' },
  { icon: <Folder />, text: 'YLIKO GI...' },
  { icon: <Excel />, text: 'Microsoft ...', active: true },
];

const Grip = () => <span className="w-[5px] h-5 border-x-2 border-dotted border-[#1b49ae]" />;

const Taskbar = () => (
  <div className="h-[31px] flex items-center bg-linear-to-b from-[#3d81ee] via-[#245edb] to-[#2054c8] text-white text-[11px] shrink-0">
    <button type="button" className="w-[115px] h-[29px] mt-[2px] pl-[10px] flex items-center gap-[6px] rounded-r-xl bg-linear-to-b from-[#6cb867] via-[#3c9a3a] to-[#2f8030]">
      <WindowsFlag /><span className="italic font-semibold text-lg leading-6 text-shadow-sm">έναρξη</span>
    </button>
    <span className="w-[9px]" /><Grip />
    <div className="flex items-center gap-[7px] pl-2 w-[159px]">
      <button type="button" aria-label="Firefox"><Firefox /></button>
      <button type="button" aria-label="Αριθμομηχανή"><Calc /></button>
      <button type="button" aria-label="Internet Explorer"><Explorer /></button>
      <button type="button" aria-label="Outlook Express"><OutlookExpress /></button>
      <button type="button" aria-label="Outlook"><Mail /></button>
      <button type="button" aria-label="Word"><Word /></button>
    </div>
    <button type="button" aria-label="Περισσότερα" className="w-[27px] -mt-3 pl-1 text-sm">»</button>
    <Grip />
    <div className="flex gap-[3px] pl-[7px]">
      {TASKS.map((t) => (
        <button key={t.text} type="button" className={`w-[101px] h-6 pl-[9px] pr-1 flex items-center gap-[5px] rounded-sm whitespace-nowrap ${t.active ? 'bg-[#1e51b8]' : 'bg-linear-to-b from-[#4a8af8] to-[#3a7ff0]'}`}>
          {t.icon}<span className="flex-1 text-left">{t.text}</span>{t.menu && <Caret className="text-white" />}
        </button>
      ))}
    </div>
    <span className="w-2" /><Grip />
    <span className="w-[58px] pl-2">EN</span>
    <div className="flex-1 h-full flex items-center gap-1 border-l border-[#0f3f9e] bg-linear-to-b from-[#19b0f0] via-[#0f8bea] to-[#1290e8]">
      <button type="button" aria-label="Εμφάνιση κρυφών εικονιδίων" className="-ml-2"><Svg s={17}><circle cx="8" cy="8" r="7.500" fill="#2f93ee" stroke="#8fc8f8" /><path d="M10 4L6 8l4 4" stroke="#fff" strokeWidth="2" /></Svg></button>
      <Svg><path d="M8 4l6 1-3 10-6-2z" fill="#c9ced6" stroke="#666d78" /><circle cx="4" cy="4" r="3.500" fill="#e0252b" /><path d="M2.500 2.500l3 3M5.500 2.500l-3 3" stroke="#fff" /></Svg>
      <Svg><path d="M1 9c2-5 6-2 8-5M3 12c4 1 7-2 11-1M7 3l7 3M6 8h8" stroke="#0f2f78" strokeWidth="3" /><path d="M2 9l4-2M9 11l5-1M8 5l3 1" stroke="#b8e0fb" strokeWidth="1.500" /></Svg>
      <span className="flex-1 pl-px whitespace-nowrap">1:42 μμ</span>
    </div>
  </div>
);

const TABS = [['Εισαγωγή', 'w-[74px]'], ['Διάταξη σελίδας', 'w-[118px]'], ['Τύποι', 'w-[52px]'], ['Δεδομένα', 'w-[86px]'], ['Αναθεώρηση', 'w-[92px]'], ['Προβολή', 'w-[82px]']];

const App = () => (
  <div className="h-screen flex flex-col overflow-hidden bg-[#bfdbff] font-['Noto_Sans','Open_Sans',sans-serif]">
    <header className="relative shrink-0">
      <div className="h-[26px] flex items-center pl-10 bg-linear-to-b from-[#e4edfa] via-[#d3e2f7] to-[#e0eafa]">
        <div className="flex items-center w-[191px] h-[21px] gap-[6px] pl-[10px] rounded-r-full border border-l-0 border-[#b2c8e6] bg-[#d3e1f4]">
          <button type="button" aria-label="Αναίρεση" className="flex items-center gap-[6px]"><Undo /><Caret className="text-[#a3b4cc]" /></button>
          <button type="button" aria-label="Επανάληψη" className="flex items-center gap-[5px]"><Redo /><Caret className="text-[#a3b4cc]" /></button>
          <button type="button" aria-label="Αποθήκευση"><Save /></button>
          <button type="button" aria-label="Προεπισκόπηση"><Preview /></button>
          <button type="button" aria-label="Ιδιότητες"><Props /></button>
          <button type="button" aria-label="Νέο"><Svg><Page /></Svg></button>
          <button type="button" aria-label="Εκτύπωση"><Print /></button>
        </div>
        <button type="button" aria-label="Προσαρμογή" className="ml-[7px] w-[5px] pt-px border-t border-[#33507f]"><Caret className="text-[#33507f]" /></button>
        <h1 className="flex-1 text-center text-xs text-[#6d7789] whitespace-pre">INTRA-SCWH007A_Infrigment_Welfare_Table-V8   [Κατάσταση λειτουργίας συμβατότητας]  <span className="text-[#3e6aaa]">- Microsoft Excel</span></h1>
        <WindowButtons />
      </div>
      <nav className="h-6 flex items-end pl-12 text-[11px] text-[#15428b] bg-[#bfdbff]">
        <button type="button" className="w-[68px] h-[22px] rounded-t-[3px] border border-b-0 border-[#93b4e0] bg-[#eaf2fc]">Κεντρική</button>
        <div className="flex items-center h-[22px] pl-1">
          {TABS.map(([name, w]) => <button key={name} type="button" className={`whitespace-nowrap ${w}`}>{name}</button>)}
        </div>
        <span className="flex-1" />
        <button type="button" aria-label="Βοήθεια" className="self-center mr-2"><Svg s={14}><circle cx="8" cy="8" r="7.500" fill="#2f62c8" stroke="#fff" /><text x="5" y="12" fontSize="11" fontWeight="bold" fill="#fff">?</text></Svg></button>
        <WindowButtons className="self-center" />
      </nav>
      <div className="absolute left-[2px] top-[3px]"><button type="button" aria-label="Κουμπί Office"><OfficeLogo /></button></div>
      <Ribbon />
      <div className="h-[25px] flex items-center bg-[#cfe0f6] border-b border-[#8ba6cb] pb-[3px]">
        <div className="flex items-center h-[21px] w-[159px] pr-2 bg-white border-y border-[#8fabd2]">
          <input aria-label="Πλαίσιο ονόματος" defaultValue="A1" className="flex-1 min-w-0 text-center text-xs text-black bg-transparent outline-none" />
          <svg viewBox="0 0 7 4" className="w-[7px] h-1"><path d="M0 0h7L3.500 4z" fill="#111" /></svg>
        </div>
        <div className="flex items-center justify-between h-[21px] w-[85px] pl-1 pr-[6px] rounded-l-full border border-[#7f9fce] bg-linear-to-b from-[#dfeafa] to-[#a7c4ec]">
          <i className="w-[9px] h-[9px] rounded-full bg-[#b3bfd0] border border-[#dde6f2]" />
          <button type="button" aria-label="Εισαγωγή συνάρτησης" className="font-['Liberation_Serif',serif] italic font-bold text-sm text-[#3c4450]">f<span className="text-[10px]">x</span></button>
        </div>
        <input aria-label="Γραμμή τύπων" className="flex-1 h-[21px] px-1 bg-white border-y border-[#8fabd2] outline-none text-xs" />
        <button type="button" aria-label="Ανάπτυξη" className="w-4 h-[21px] border border-[#7f9fce] bg-[#d6e5f8] flex items-center justify-center"><Svg s={11}><path d="M3 2l5 5 5-5M3 8l5 5 5-5" stroke="#111" strokeWidth="2.500" /></Svg></button>
      </div>
    </header>

    <main className="flex-1 min-h-0 flex overflow-hidden">
      <div className="flex-1 min-w-0 overflow-hidden"><Sheet /></div>
      <VerticalScroll />
    </main>
    <SheetTabs />
    <StatusBar />
    <Taskbar />
  </div>
);

export default App;
